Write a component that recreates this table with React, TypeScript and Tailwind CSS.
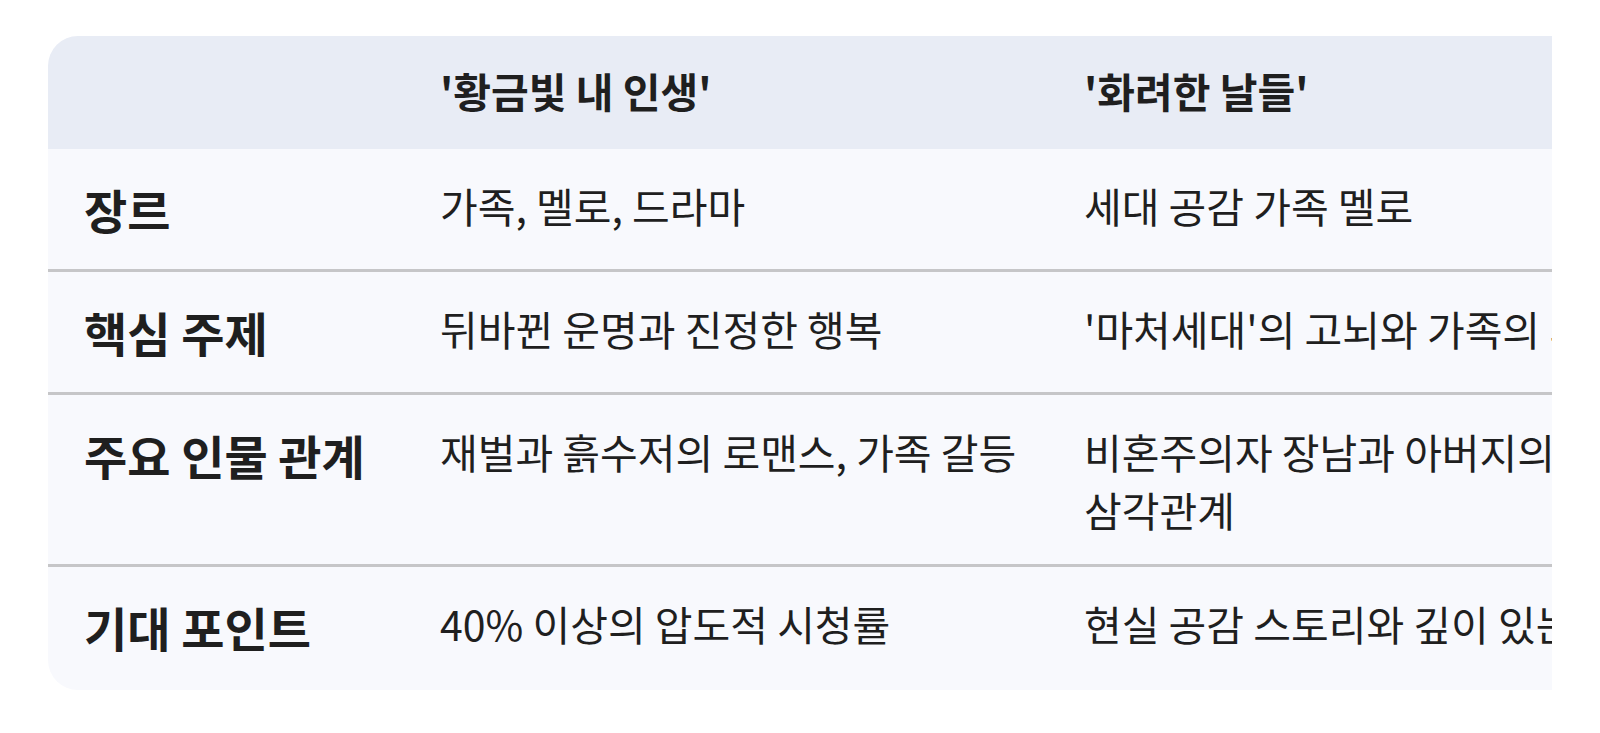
import React from 'react';

interface CompareRow {
  label: string;
  golden: string;
  splendid: string;
}

const rows: CompareRow[] = [
  { label: '장르', golden: '가족, 멜로, 드라마', splendid: '세대 공감 가족 멜로' },
  { label: '핵심 주제', golden: '뒤바뀐 운명과 진정한 행복', splendid: "'마처세대'의 고뇌와 가족의 의미" },
  { label: '주요 인물 관계', golden: '재벌과 흙수저의 로맨스, 가족 갈등', splendid: '비혼주의자 장남과 아버지의 삼각관계' },
  { label: '기대 포인트', golden: '40% 이상의 압도적 시청률', splendid: '현실 공감 스토리와 깊이 있는 연기' },
];

const cols = 'grid grid-cols-[356px_644px_644px] items-start';
const cell = 'pl-9 pr-6 break-keep';

export default function App() {
  return (
    <div
      className="min-h-screen bg-white px-12 pt-9 text-[#1f1f1f]"
      style={{ fontFamily: '"Noto Sans CJK KR", "Noto Sans", sans-serif' }}
    >
      <div className="overflow-hidden">
        <div className="w-max overflow-hidden rounded-[30px]">
          {/* header */}
          <div className={`${cols} bg-[#e8ecf5] text-[41px] leading-[61px] font-semibold`}>
            <div className={`${cell} pt-6 pb-7`}>&nbsp;</div>
            <div className={`${cell} pt-6 pb-7`}>'황금빛 내 인생'</div>
            <div className={`${cell} pt-6 pb-7`}>'화려한 날들'</div>
          </div>

          {rows.map((row, i) => (
            <div
              key={row.label}
              className={`${cols} bg-[#f8f9fd] ${
                i < rows.length - 1 ? 'border-b-[3px] border-[#c6c6c8]' : 'pb-[3px]'
              }`}
            >
              <div className={`${cell} py-[26px] text-[47px] leading-[68px] font-bold`}>{row.label}</div>
              <div className={`${cell} pt-[27px] pb-[26px] text-[41px] leading-[58px]`}>{row.golden}</div>
              <div className={`${cell} pt-[27px] pb-[26px] text-[41px] leading-[58px]`}>{row.splendid}</div>
            </div>
          ))}
        </div>
      </div>
    </div>
  );
}
